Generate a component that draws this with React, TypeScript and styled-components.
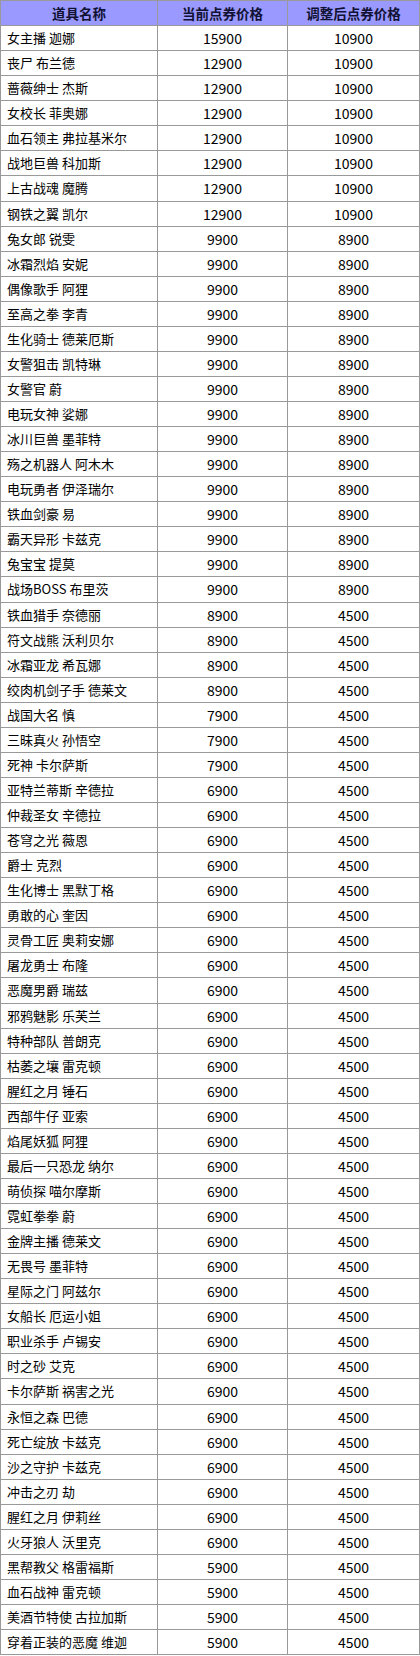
import React from "react";
import styled, { createGlobalStyle } from "styled-components";

const Global = createGlobalStyle`
  html, body { margin: 0; padding: 0; background: #ffffff; }
  body { font-family: "Noto Sans CJK SC", "Noto Sans", sans-serif; }
`;

const rows: [string, string, string][] = [
  ["女主播 迦娜", "15900", "10900"],
  ["丧尸 布兰德", "12900", "10900"],
  ["蔷薇绅士 杰斯", "12900", "10900"],
  ["女校长 菲奥娜", "12900", "10900"],
  ["血石领主 弗拉基米尔", "12900", "10900"],
  ["战地巨兽 科加斯", "12900", "10900"],
  ["上古战魂 魔腾", "12900", "10900"],
  ["钢铁之翼 凯尔", "12900", "10900"],
  ["兔女郎 锐雯", "9900", "8900"],
  ["冰霜烈焰 安妮", "9900", "8900"],
  ["偶像歌手 阿狸", "9900", "8900"],
  ["至高之拳 李青", "9900", "8900"],
  ["生化骑士 德莱厄斯", "9900", "8900"],
  ["女警狙击 凯特琳", "9900", "8900"],
  ["女警官 蔚", "9900", "8900"],
  ["电玩女神 娑娜", "9900", "8900"],
  ["冰川巨兽 墨菲特", "9900", "8900"],
  ["殇之机器人 阿木木", "9900", "8900"],
  ["电玩勇者 伊泽瑞尔", "9900", "8900"],
  ["铁血剑豪 易", "9900", "8900"],
  ["霸天异形 卡兹克", "9900", "8900"],
  ["兔宝宝 提莫", "9900", "8900"],
  ["战场BOSS 布里茨", "9900", "8900"],
  ["铁血猎手 奈德丽", "8900", "4500"],
  ["符文战熊 沃利贝尔", "8900", "4500"],
  ["冰霜亚龙 希瓦娜", "8900", "4500"],
  ["绞肉机剑子手 德莱文", "8900", "4500"],
  ["战国大名 慎", "7900", "4500"],
  ["三昧真火 孙悟空", "7900", "4500"],
  ["死神 卡尔萨斯", "7900", "4500"],
  ["亚特兰蒂斯 辛德拉", "6900", "4500"],
  ["仲裁圣女 辛德拉", "6900", "4500"],
  ["苍穹之光 薇恩", "6900", "4500"],
  ["爵士 克烈", "6900", "4500"],
  ["生化博士 黑默丁格", "6900", "4500"],
  ["勇敢的心 奎因", "6900", "4500"],
  ["灵骨工匠 奥莉安娜", "6900", "4500"],
  ["屠龙勇士 布隆", "6900", "4500"],
  ["恶魔男爵 瑞兹", "6900", "4500"],
  ["邪鸦魅影 乐芙兰", "6900", "4500"],
  ["特种部队 普朗克", "6900", "4500"],
  ["枯萎之壤 雷克顿", "6900", "4500"],
  ["腥红之月 锤石", "6900", "4500"],
  ["西部牛仔 亚索", "6900", "4500"],
  ["焰尾妖狐 阿狸", "6900", "4500"],
  ["最后一只恐龙 纳尔", "6900", "4500"],
  ["萌侦探 喵尔摩斯", "6900", "4500"],
  ["霓虹拳拳 蔚", "6900", "4500"],
  ["金牌主播 德莱文", "6900", "4500"],
  ["无畏号 墨菲特", "6900", "4500"],
  ["星际之门 阿兹尔", "6900", "4500"],
  ["女船长 厄运小姐", "6900", "4500"],
  ["职业杀手 卢锡安", "6900", "4500"],
  ["时之砂 艾克", "6900", "4500"],
  ["卡尔萨斯 祸害之光", "6900", "4500"],
  ["永恒之森 巴德", "6900", "4500"],
  ["死亡绽放 卡兹克", "6900", "4500"],
  ["沙之守护 卡兹克", "6900", "4500"],
  ["冲击之刃 劫", "6900", "4500"],
  ["腥红之月 伊莉丝", "6900", "4500"],
  ["火牙狼人 沃里克", "6900", "4500"],
  ["黑帮教父 格雷福斯", "5900", "4500"],
  ["血石战神 雷克顿", "5900", "4500"],
  ["美酒节特使 古拉加斯", "5900", "4500"],
  ["穿着正装的恶魔 维迦", "5900", "4500"],
];

const Table = styled.table`
  border-collapse: collapse;
  width: 419px;
  table-layout: fixed;
  font-size: 13px;
  color: #000;
`;

const Col = styled.col<{ $w: number }>`
  width: ${(p) => p.$w}px;
`;

const HeadCell = styled.th`
  background: #9999ff;
  border: 1px solid #999999;
  font-weight: bold;
  font-size: 13.5px;
  text-align: center;
  line-height: 24.06px;
  padding: 0;
  color: #111133;
`;

const Cell = styled.td<{ $align?: "left" | "center" }>`
  border: 1px solid #999999;
  line-height: 24.06px;
  font-size: ${(p) => (p.$align === "left" ? "13px" : "14px")};
  padding: ${(p) => (p.$align === "left" ? "0 0 0 6px" : "0")};
  text-align: ${(p) => p.$align ?? "center"};
  white-space: nowrap;
  overflow: hidden;
`;

export default function App() {
  return (
    <>
      <Global />
      <Table>
        <colgroup>
          <Col $w={157} />
          <Col $w={130} />
          <Col $w={132} />
        </colgroup>
        <thead>
          <tr>
            <HeadCell>道具名称</HeadCell>
            <HeadCell>当前点券价格</HeadCell>
            <HeadCell>调整后点券价格</HeadCell>
          </tr>
        </thead>
        <tbody>
          {rows.map(([name, cur, next]) => (
            <tr key={name}>
              <Cell $align="left">{name}</Cell>
              <Cell>{cur}</Cell>
              <Cell>{next}</Cell>
            </tr>
          ))}
        </tbody>
      </Table>
    </>
  );
}
